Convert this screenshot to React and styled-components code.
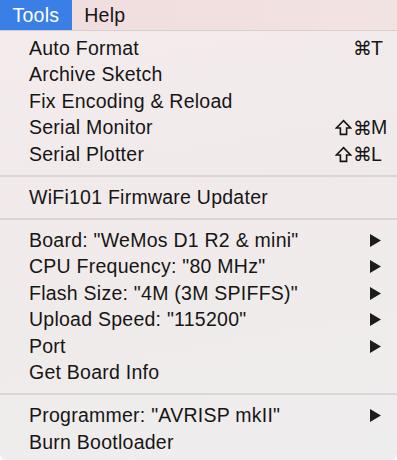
import React from "react";
import styled, { createGlobalStyle } from "styled-components";

const GlobalStyle = createGlobalStyle`
  html, body { margin: 0; padding: 0; background: #ffffff; }
  body { font-family: "Liberation Sans", Arial, "DejaVu Sans", sans-serif; }
`;

const Screen = styled.div`
  width: 397px;
  height: 460px;
  overflow: hidden;
  display: flex;
  flex-direction: column;
  font-family: "Liberation Sans", Arial, "DejaVu Sans", sans-serif;
  color: #161616;
`;

const MenuBar = styled.div`
  display: flex;
  height: 30px;
  background: linear-gradient(90deg, #f0dcdd 0%, #f2e0e0 60%, #f2e3e3 100%);
  border-bottom: 1px solid #d6cdcd;
  flex: none;
`;

const MenuTitle = styled.div`
  display: flex;
  align-items: center;
  padding: 0 12.5px;
  font-size: 19.5px;
  letter-spacing: 0.25px;
  background: ${(p) => (p.$active ? "#3a7fe6" : "transparent")};
  color: ${(p) => (p.$active ? "#ffffff" : "#161616")};
`;

const Menu = styled.div`
  flex: 1;
  padding-top: 4px;
  background: linear-gradient(170deg, #f4ecec 0%, #f1eaea 40%, #eeeded 100%);
  border-radius: 0 0 6px 6px;
`;

const Item = styled.div`
  display: grid;
  grid-template-columns: 1fr auto;
  align-items: center;
  height: 26.5px;
  padding: 0 9px 0 29px;
  font-size: 19.5px;
  letter-spacing: 0.25px;
  white-space: nowrap;
`;

const Shortcut = styled.span`
  display: flex;
  align-items: center;
`;

const ShiftIcon = styled.svg`
  display: block;
  margin-right: 1px;
`;

const Cmd = styled.span`
  font-family: "DejaVu Sans", "Liberation Sans", sans-serif;
  font-size: 19px;
  width: 18px;
  text-align: center;
`;

const Key = styled.span`
  width: 17px;
  text-align: left;
  font-size: 19.5px;
`;

const ArrowIcon = styled.svg`
  margin-right: 7px;
  display: block;
`;

const Separator = styled.div`
  height: 16.5px;
  display: flex;
  align-items: center;
  &::after {
    content: "";
    flex: 1;
    height: 2px;
    background: #dcd5d5;
  }
`;

const Arrow = () => (
  <ArrowIcon width="11" height="13" viewBox="0 0 11 13">
    <polygon points="0,0 11,6.5 0,13" fill="#1c1c1c" />
  </ArrowIcon>
);

const Shift = () => (
  <ShiftIcon width="17" height="17" viewBox="0 0 17 17">
    <polygon
      points="8.5,1.6 15.6,9 11.6,9 11.6,15.4 5.4,15.4 5.4,9 1.4,9"
      fill="none"
      stroke="#161616"
      strokeWidth="1.6"
      strokeLinejoin="miter"
    />
  </ShiftIcon>
);

const groups = [
  [
    { label: "Auto Format", key: "T" },
    { label: "Archive Sketch" },
    { label: "Fix Encoding & Reload" },
    { label: "Serial Monitor", shift: true, key: "M" },
    { label: "Serial Plotter", shift: true, key: "L" },
  ],
  [{ label: "WiFi101 Firmware Updater" }],
  [
    { label: 'Board: "WeMos D1 R2 & mini"', sub: true },
    { label: 'CPU Frequency: "80 MHz"', sub: true },
    { label: 'Flash Size: "4M (3M SPIFFS)"', sub: true },
    { label: 'Upload Speed: "115200"', sub: true },
    { label: "Port", sub: true },
    { label: "Get Board Info" },
  ],
  [
    { label: 'Programmer: "AVRISP mkII"', sub: true },
    { label: "Burn Bootloader" },
  ],
];

export default function App() {
  return (
    <>
      <GlobalStyle />
      <Screen>
        <MenuBar>
          <MenuTitle $active>Tools</MenuTitle>
          <MenuTitle>Help</MenuTitle>
        </MenuBar>
        <Menu>
          {groups.map((g, gi) => (
            <React.Fragment key={gi}>
              {gi > 0 && <Separator />}
              {g.map((it) => (
                <Item key={it.label}>
                  <span>{it.label}</span>
                  {it.key ? (
                    <Shortcut>
                      {it.shift && <Shift />}
                      <Cmd>⌘</Cmd>
                      <Key>{it.key}</Key>
                    </Shortcut>
                  ) : it.sub ? (
                    <Arrow />
                  ) : (
                    <span />
                  )}
                </Item>
              ))}
            </React.Fragment>
          ))}
        </Menu>
      </Screen>
    </>
  );
}
